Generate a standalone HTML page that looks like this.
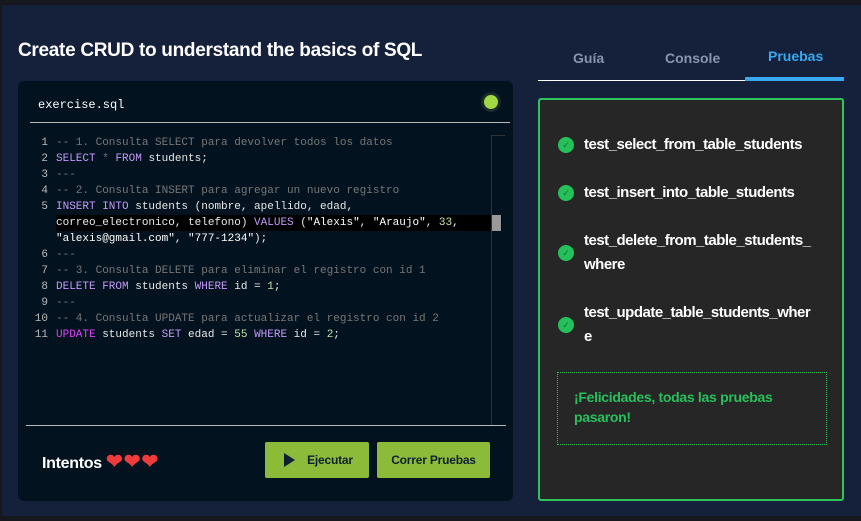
<!DOCTYPE html>
<html><head><meta charset="utf-8"><style>
*{margin:0;padding:0;box-sizing:border-box}
body{width:861px;height:521px;overflow:hidden;background:#15203b;font-family:"Liberation Sans",sans-serif;position:relative}
.top{position:absolute;left:0;top:0;width:861px;height:5px;background:#17181d}
.lft{position:absolute;left:0;top:0;width:2px;height:521px;background:#17181d}
.bot{position:absolute;left:0;top:516px;width:861px;height:5px;background:#17181d}
h1{position:absolute;left:18px;top:40px;font-size:19px;font-weight:bold;color:#fff;letter-spacing:-0.3px}
.ed{position:absolute;left:18px;top:81px;width:495px;height:420px;background:#03121f;border-radius:6px}
.fn{position:absolute;left:20px;top:17px;font-family:"Liberation Mono",monospace;font-size:12px;color:#fff}
.dot{position:absolute;left:466px;top:14px;width:14px;height:14px;border-radius:50%;background:#a0d843;box-shadow:0 0 0 3px #1a2a2a}
.hr1{position:absolute;left:12px;top:41px;width:480px;height:1px;background:#bbb}
.hr2{position:absolute;left:8px;top:344px;width:480px;height:1px;background:#bbb}
.sb{position:absolute;left:473px;top:55px;width:1px;height:290px;background:#333}
.sbt{position:absolute;left:473px;top:54px;width:14px;height:1px;background:#333}
.th{position:absolute;left:474px;top:134px;width:9px;height:16px;background:#999}
.hl{position:absolute;left:38px;top:134px;width:446px;height:16px;background:#000}
.code{position:absolute;left:0;top:54px;font-family:"Liberation Mono",monospace;font-size:11px;line-height:16px;color:#e8e8e8}
.code div{height:16px;white-space:pre}
.n{display:inline-block;width:30px;text-align:right;color:#bbb;margin-right:8px}
.c{color:#777}.k{color:#c39af7}.u{color:#e040fb}.s{color:#fff}.num{color:#c5e1a5}
.btm{position:absolute;left:24px;top:368px;color:#fff;font-size:16px;font-weight:bold;letter-spacing:-0.3px}
.h{color:#ef3b3b;font-size:20px;letter-spacing:1px}
.btn{position:absolute;top:361px;height:36px;background:#8cbb3a;color:#102030;font-size:12px;font-weight:bold;border-radius:2px;display:flex;align-items:center;justify-content:center;letter-spacing:-0.2px}
.tabs{position:absolute;left:538px;top:46px;width:306px;font-size:14px;font-weight:bold}
.tab{position:absolute;top:4px;color:#8895ad}
.tl{position:absolute;left:538px;top:80px;width:207px;height:1px;background:#fff}
.ta{position:absolute;left:745px;top:77px;width:99px;height:4px;background:#3aa8ee}
.pn{position:absolute;left:538px;top:98px;width:306px;height:403px;background:#262626;border:2px solid #30c55c;border-radius:3px}
.t{position:absolute;left:44px;color:#fff;font-size:15px;font-weight:bold;letter-spacing:-0.5px;line-height:24px}
.ck{position:absolute;left:18px;width:16px;height:16px;border-radius:50%;background:#25c05a;color:#073;font-size:9px;text-align:center;line-height:16px}
.msg{position:absolute;left:17px;top:272px;width:270px;height:73px;border:1px dotted #2fbf5a;color:#27c05a;font-size:14px;font-weight:bold;padding:14px 16px;line-height:20px;letter-spacing:-0.3px}
</style></head><body>
<div class="top"></div><div class="lft"></div><div class="bot"></div>
<h1>Create CRUD to understand the basics of SQL</h1>
<div class="ed">
<div class="fn">exercise.sql</div><div class="dot"></div>
<div class="hr1"></div>
<div class="hl"></div>
<div class="sbt"></div><div class="sb"></div><div class="th"></div>
<div class="code"><div><span class="n">1</span><span class="c">-- 1. Consulta SELECT para devolver todos los datos</span></div><div><span class="n">2</span><span class="k">SELECT</span> <span class="c">*</span> <span class="k">FROM</span> students;</div><div><span class="n">3</span><span class="c">---</span></div><div><span class="n">4</span><span class="c">-- 2. Consulta INSERT para agregar un nuevo registro</span></div><div><span class="n">5</span><span class="k">INSERT INTO</span> students (nombre, apellido, edad,</div><div><span class="n"></span>correo_electronico, telefono) <span class="k">VALUES</span> (<span class="s">"Alexis"</span>, <span class="s">"Araujo"</span>, <span class="num">33</span>,</div><div><span class="n"></span><span class="s">"alexis@gmail.com"</span>, <span class="s">"777-1234"</span>);</div><div><span class="n">6</span><span class="c">---</span></div><div><span class="n">7</span><span class="c">-- 3. Consulta DELETE para eliminar el registro con id 1</span></div><div><span class="n">8</span><span class="k">DELETE FROM</span> students <span class="k">WHERE</span> id = <span class="num">1</span>;</div><div><span class="n">9</span><span class="c">---</span></div><div><span class="n">10</span><span class="c">-- 4. Consulta UPDATE para actualizar el registro con id 2</span></div><div><span class="n">11</span><span class="u">UPDATE</span> students <span class="k">SET</span> edad = <span class="num">55</span> <span class="k">WHERE</span> id = <span class="num">2</span>;</div></div>
<div class="hr2"></div>
<div class="btm">Intentos <span class="h">❤❤❤</span></div>
<div class="btn" style="left:247px;width:104px"><svg width="16" height="16" viewBox="0 0 16 16" style="margin-right:10px"><path d="M3 1L14 8L3 15Z" fill="#102030"/></svg>Ejecutar</div>
<div class="btn" style="left:359px;width:113px">Correr Pruebas</div>
</div>
<div class="tabs"><span class="tab" style="left:35px">Guía</span><span class="tab" style="left:127px">Console</span><span class="tab" style="left:230px;top:2px;color:#3aa8ee">Pruebas</span></div>
<div class="tl"></div><div class="ta"></div>
<div class="pn">
<div class="ck" style="top:37px">✓</div><div class="t" style="top:33px">test_select_from_table_students</div>
<div class="ck" style="top:85px">✓</div><div class="t" style="top:81px">test_insert_into_table_students</div>
<div class="ck" style="top:145px">✓</div><div class="t" style="top:129px">test_delete_from_table_students_<br>where</div>
<div class="ck" style="top:217px">✓</div><div class="t" style="top:201px">test_update_table_students_wher<br>e</div>
<div class="msg">¡Felicidades, todas las pruebas pasaron!</div>
</div>
</body></html>
